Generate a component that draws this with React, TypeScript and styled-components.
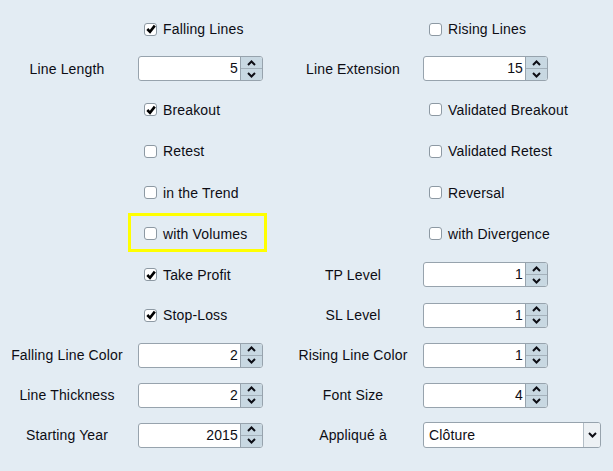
import React from 'react'
import styled, { createGlobalStyle } from 'styled-components'

const Global = createGlobalStyle`
	html, body {
		margin: 0;
		padding: 0;
		background: #e3ecf3;
	}
	body {
		font-family: 'Liberation Sans', Arial, sans-serif;
		font-size: 14px;
		letter-spacing: 0.15px;
		color: #0d0d14;
	}
`

const Panel = styled.div`
	width: 613px;
	height: 471px;
	box-sizing: border-box;
	padding-top: 10px;
	background: #e3ecf3;
`

const Row = styled.div<{ $h: number }>`
	display: grid;
	grid-template-columns: 138px 125px 160px 1fr;
	align-items: center;
	height: ${p => p.$h}px;
`

const Label = styled.div<{ $side: 'left' | 'right' }>`
	text-align: center;
	white-space: nowrap;
	padding-left: ${p => (p.$side === 'right' ? 20 : 0)}px;
	padding-right: ${p => (p.$side === 'left' ? 4 : 0)}px;
`

const Cell = styled.div`
	position: relative;
	height: 100%;
	display: flex;
	align-items: center;
`

const CheckWrap = styled.label`
	display: flex;
	align-items: center;
	gap: 6px;
	padding-left: 6px;
	white-space: nowrap;
	cursor: default;
`

const Box = styled.span`
	width: 13px;
	height: 13px;
	box-sizing: border-box;
	border: 1.5px solid #8d99a3;
	border-radius: 3px;
	background: #fff;
	display: flex;
	align-items: center;
	justify-content: center;
`

const Highlight = styled.div`
	position: absolute;
	top: 0;
	left: -10px;
	width: 139px;
	height: 39px;
	box-sizing: border-box;
	border: 3px solid #ffff00;
	pointer-events: none;
`

const SpinBox = styled.div`
	display: flex;
	width: 125px;
	height: 25px;
	box-sizing: border-box;
	border: 1px solid #97a3ad;
	border-radius: 3px;
	background: #fff;
	overflow: hidden;
`

const SpinField = styled.div`
	flex: 1;
	text-align: right;
	padding-right: 2px;
	line-height: 23px;
`

const SpinButtons = styled.div`
	width: 21px;
	display: flex;
	flex-direction: column;
	border-left: 1px solid #97a3ad;
	background: #c8d8e2;
`

const SpinButton = styled.div<{ $top?: boolean }>`
	flex: 1;
	display: flex;
	align-items: center;
	justify-content: center;
	border-bottom: ${p => (p.$top ? '1px solid #a3b0ba' : 'none')};
`

const Combo = styled.div`
	display: flex;
	width: 178px;
	height: 26px;
	box-sizing: border-box;
	border: 1px solid #97a3ad;
	border-radius: 3px;
	background: #fff;
	overflow: hidden;
`

const ComboText = styled.div`
	flex: 1;
	padding-left: 5px;
	line-height: 24px;
`

const ComboButton = styled.div`
	width: 16px;
	display: flex;
	align-items: center;
	justify-content: center;
	border-left: 1px solid #b4bec6;
	background: #edf1f4;
`

const Chevron = ({ up }: { up?: boolean }) => (
	<svg width="9" height="6" viewBox="0 0 9 6">
		<path
			d={up ? 'M1 5 L4.5 1.5 L8 5' : 'M1 1 L4.5 4.5 L8 1'}
			fill="none"
			stroke="#0d0d14"
			strokeWidth="2"
		/>
	</svg>
)

const Check: React.FC<{ label: string; checked?: boolean }> = ({ label, checked }) => (
	<CheckWrap>
		<Box>
			{checked && (
				<svg width="10" height="10" viewBox="0 0 10 10">
					<path d="M1.3 5 L4 7.8 L8.8 1.6" fill="none" stroke="#000" strokeWidth="2.6" />
				</svg>
			)}
		</Box>
		{label}
	</CheckWrap>
)

const Spinner: React.FC<{ value: number }> = ({ value }) => (
	<SpinBox>
		<SpinField>{value}</SpinField>
		<SpinButtons>
			<SpinButton $top>
				<Chevron up />
			</SpinButton>
			<SpinButton>
				<Chevron />
			</SpinButton>
		</SpinButtons>
	</SpinBox>
)

export default function App() {
	return (
		<>
			<Global />
			<Panel>
				<Row $h={38}>
					<div />
					<Cell><Check label="Falling Lines" checked /></Cell>
					<div />
					<Cell><Check label="Rising Lines" /></Cell>
				</Row>
				<Row $h={41}>
					<Label $side="left">Line Length</Label>
					<Spinner value={5} />
					<Label $side="right">Line Extension</Label>
					<Spinner value={15} />
				</Row>
				<Row $h={41}>
					<div />
					<Cell><Check label="Breakout" checked /></Cell>
					<div />
					<Cell><Check label="Validated Breakout" /></Cell>
				</Row>
				<Row $h={42}>
					<div />
					<Cell><Check label="Retest" /></Cell>
					<div />
					<Cell><Check label="Validated Retest" /></Cell>
				</Row>
				<Row $h={41}>
					<div />
					<Cell><Check label="in the Trend" /></Cell>
					<div />
					<Cell><Check label="Reversal" /></Cell>
				</Row>
				<Row $h={41}>
					<div />
					<Cell>
						<Check label="with Volumes" />
						<Highlight />
					</Cell>
					<div />
					<Cell><Check label="with Divergence" /></Cell>
				</Row>
				<Row $h={41}>
					<div />
					<Cell><Check label="Take Profit" checked /></Cell>
					<Label $side="right">TP Level</Label>
					<Spinner value={1} />
				</Row>
				<Row $h={40}>
					<div />
					<Cell><Check label="Stop-Loss" checked /></Cell>
					<Label $side="right">SL Level</Label>
					<Spinner value={1} />
				</Row>
				<Row $h={40}>
					<Label $side="left">Falling Line Color</Label>
					<Spinner value={2} />
					<Label $side="right">Rising Line Color</Label>
					<Spinner value={1} />
				</Row>
				<Row $h={40}>
					<Label $side="left">Line Thickness</Label>
					<Spinner value={2} />
					<Label $side="right">Font Size</Label>
					<Spinner value={4} />
				</Row>
				<Row $h={40}>
					<Label $side="left">Starting Year</Label>
					<Spinner value={2015} />
					<Label $side="right">Appliqué à</Label>
					<Combo>
						<ComboText>Clôture</ComboText>
						<ComboButton>
							<Chevron />
						</ComboButton>
					</Combo>
				</Row>
			</Panel>
		</>
	)
}
